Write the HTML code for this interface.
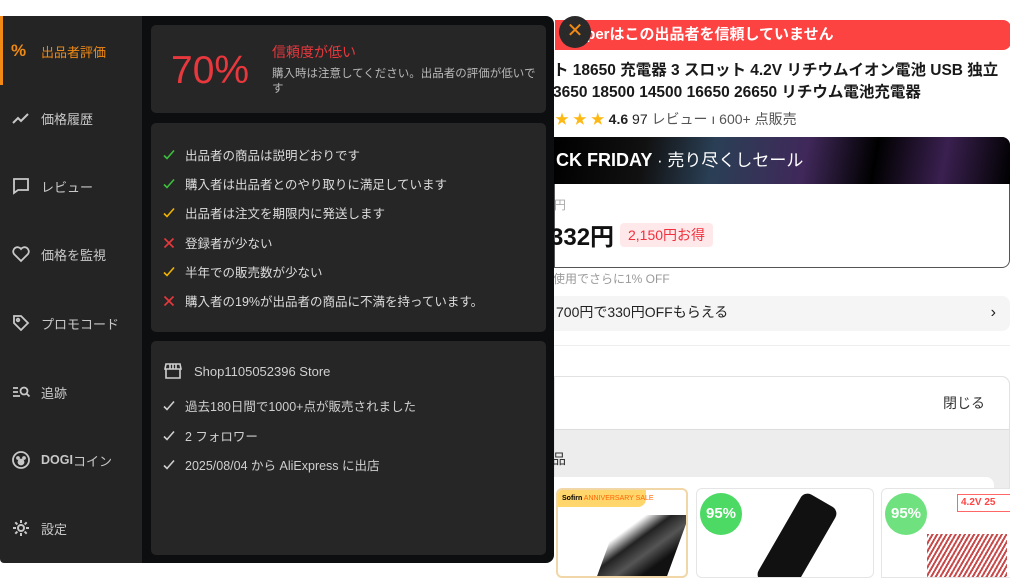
<!DOCTYPE html>
<html><head><meta charset="utf-8"><style>
*{margin:0;padding:0;box-sizing:border-box}
body{width:1024px;height:572px;overflow:hidden;background:#fff;font-family:"Liberation Sans","Noto Sans CJK JP",sans-serif;position:relative}
.a{position:absolute}
.side{left:0;top:16px;width:142px;height:547px;background:#242424;border-radius:0 0 0 4px}
.main{left:142px;top:16px;width:412px;height:547px;background:#0c0e10;border-radius:0 8px 8px 0}
.card{position:absolute;left:9px;width:395px;background:#262626;border-radius:5px}
.it{position:absolute;left:11px;display:flex;align-items:center;color:#c8c8c8;font-size:13px}
.it svg{width:20px;height:20px;margin-right:10px}
.li{position:absolute;left:12px;font-size:12.5px;color:#dcdcdc;display:flex;align-items:center}
.li svg{width:12px;height:12px;margin-right:10px}
</style></head><body>
<div class="a" style="left:555px;top:20px;width:456px;height:30px;background:#fd4242;border-radius:0 8px 8px 0;color:#fff;font-weight:bold;font-size:15px;line-height:30px;padding-left:12px">Al perはこの出品者を信頼していません</div>
<div class="a" style="left:553px;top:60px;font-weight:bold;font-size:15.5px;line-height:22px;color:#191919;white-space:nowrap">ト 18650 充電器 3 スロット 4.2V リチウムイオン電池 USB 独立<br>3650 18500 14500 16650 26650 リチウム電池充電器</div>
<div class="a" style="left:555px;top:109px;font-size:14px;color:#222;white-space:nowrap"><span style="color:#fdb813">★ ★ ★</span> <b>4.6</b> 97 <span style="color:#555">レビュー ı 600+ 点販売</span></div>
<div class="a" style="left:554px;top:137px;width:456px;height:131px;border:1px solid #555;border-radius:0 8px 8px 0"></div>
<div class="a" style="left:554px;top:137px;width:456px;height:47px;background:linear-gradient(100deg,#000 0%,#111 20%,#2a3f55 35%,#40285a 55%,#000 70%,#3a2050 85%,#000);border-radius:0 8px 0 0;color:#fff;font-weight:bold;font-size:18px;line-height:47px;padding-left:2px">CK FRIDAY <span style="font-weight:normal;font-size:17px">· 売り尽くしセール</span></div>
<div class="a" style="left:554px;top:196px;color:#aaa;font-size:12px">円</div>
<div class="a" style="left:550px;top:217px;color:#111;font-weight:bold;font-size:24px">332円</div>
<div class="a" style="left:620px;top:223px;background:#ffe8ea;color:#f0303c;font-size:14px;padding:2px 8px;border-radius:4px">2,150円お得</div>
<div class="a" style="left:553px;top:270px;color:#999;font-size:12px">使用でさらに1% OFF</div>
<div class="a" style="left:554px;top:296px;width:456px;height:35px;background:#f5f5f5;border-radius:0 8px 8px 0;font-size:14px;line-height:33px;color:#222;padding-left:2px">700円で330円OFFもらえる<span style="position:absolute;right:14px;font-size:16px">›</span></div>
<div class="a" style="left:554px;top:345px;width:456px;height:1px;background:#eee"></div>
<div class="a" style="left:554px;top:376px;width:456px;height:200px;border:1px solid #e2e2e2;border-radius:0 8px 0 0;background:#ededed"></div>
<div class="a" style="left:555px;top:377px;width:454px;height:53px;background:#fff;border-radius:0 8px 0 0;border-bottom:1px solid #ddd"></div>
<div class="a" style="left:943px;top:393px;font-size:14px;color:#333">閉じる</div>
<div class="a" style="left:552px;top:449px;font-size:14px;color:#333">品</div>
<div class="a" style="left:554px;top:477px;width:440px;height:100px;background:#fff;border-radius:0 8px 0 0"></div>
<div class="a" style="left:556px;top:488px;width:132px;height:90px;border:2px solid #f1d7a8;border-radius:6px;background:#fff;overflow:hidden">
<div class="a" style="left:0;top:0;width:88px;height:17px;background:#ffd66b;border-radius:0 0 8px 0;font-size:7px;line-height:17px;padding-left:4px;white-space:nowrap"><b>Sofirn</b> <span style="color:#f60">ANNIVERSARY SALE</span></div>
<div class="a" style="left:50px;top:25px;width:70px;height:62px;background:linear-gradient(135deg,#fff 20%,#222 40%,#555 60%,#111 80%);transform:skewX(-20deg)"></div></div>
<div class="a" style="left:696px;top:488px;width:178px;height:90px;border:1px solid #e5e5e5;border-radius:6px;background:#fff;overflow:hidden">
<div class="a" style="left:80px;top:5px;width:40px;height:100px;background:#111;transform:rotate(30deg);border-radius:8px"></div></div>
<div class="a" style="left:700px;top:493px;width:42px;height:42px;border-radius:50%;background:#4cd964;color:#fff;font-weight:bold;font-size:15px;line-height:42px;text-align:center">95%</div>
<div class="a" style="left:881px;top:488px;width:129px;height:90px;border:1px solid #e5e5e5;border-right:none;border-radius:6px 0 0 0;background:#fff;overflow:hidden">
<div class="a" style="left:75px;top:5px;width:60px;height:18px;border:1px solid #f66;color:#f44;font-size:10px;font-weight:bold;padding-left:3px;line-height:16px">4.2V 25</div>
<div class="a" style="left:45px;top:45px;width:80px;height:50px;background:repeating-linear-gradient(120deg,#c94a4a 0 2px,#fff 2px 4px)"></div></div>
<div class="a" style="left:885px;top:493px;width:42px;height:42px;border-radius:50%;background:#6fe27f;color:#fff;font-weight:bold;font-size:15px;line-height:42px;text-align:center">95%</div>
<div class="a" style="left:1010px;top:0;width:14px;height:572px;background:#fff"></div>

<div class="a side">
<div class="a" style="left:0;top:0;width:3px;height:69px;background:#f08a14"></div>
<div class="it" style="top:25px;color:#f08a14"><span style="width:20px;margin-right:10px;font-weight:bold;font-size:17px">%</span>出品者評価</div>
<div class="it" style="top:92px"><svg viewBox="0 0 20 20" fill="none" stroke="#c8c8c8" stroke-width="2"><path d="M2 15l5-5 3 3 7-7"/></svg>価格履歴</div>
<div class="it" style="top:160px"><svg viewBox="0 0 20 20" fill="none" stroke="#c8c8c8" stroke-width="1.8"><path d="M3 3h14v11H7l-4 3z"/></svg>レビュー</div>
<div class="it" style="top:228px"><svg viewBox="0 0 20 20" fill="none" stroke="#c8c8c8" stroke-width="1.8"><path d="M10 17L3 10a4 4 0 0 1 7-5 4 4 0 0 1 7 5z"/></svg>価格を監視</div>
<div class="it" style="top:297px"><svg viewBox="0 0 20 20" fill="none" stroke="#c8c8c8" stroke-width="1.8"><path d="M3 3h7l7 7-7 7-7-7z"/><circle cx="7" cy="7" r="1.3"/></svg>プロモコード</div>
<div class="it" style="top:366px"><svg viewBox="0 0 20 20" fill="none" stroke="#c8c8c8" stroke-width="1.8"><path d="M2 6h5M2 10h5M2 14h7"/><circle cx="13" cy="9" r="3.5"/><path d="M15.5 11.5l3 3"/></svg>追跡</div>
<div class="it" style="top:434px"><svg viewBox="0 0 20 20" fill="none" stroke="#c8c8c8" stroke-width="1.8"><circle cx="10" cy="10" r="8"/><circle cx="10" cy="12" r="2.5" fill="#c8c8c8"/><circle cx="7" cy="8" r="1" fill="#c8c8c8"/><circle cx="13" cy="8" r="1" fill="#c8c8c8"/></svg><b style="font-size:12.5px">DOGI</b>コイン</div>
<div class="it" style="top:502px"><svg viewBox="0 0 20 20" fill="none" stroke="#c8c8c8" stroke-width="2"><circle cx="10" cy="10" r="3"/><path d="M10 2v3M10 15v3M2 10h3M15 10h3M4.3 4.3l2.1 2.1M13.6 13.6l2.1 2.1M4.3 15.7l2.1-2.1M13.6 6.4l2.1-2.1"/></svg>設定</div>
</div>
<div class="a main">
<div class="card" style="top:9px;height:88px">
<div class="a" style="left:20px;top:24px;font-size:39px;color:#e8383d;font-weight:300">70%</div>
<div class="a" style="left:121px;top:17px;font-size:14px;color:#e8383d">信頼度が低い</div>
<div class="a" style="left:121px;top:42px;width:274px;font-size:11.5px;line-height:15px;color:#b8b8b8">購入時は注意してください。出品者の評価が低いです</div>
</div>
<div class="card" style="top:107px;height:209px">
<div class="li" style="top:22px"><svg viewBox="0 0 12 12" fill="none" stroke="#3cc03c" stroke-width="1.6"><path d="M1 6.5l3 3 7-8"/></svg>出品者の商品は説明どおりです</div>
<div class="li" style="top:51px"><svg viewBox="0 0 12 12" fill="none" stroke="#3cc03c" stroke-width="1.6"><path d="M1 6.5l3 3 7-8"/></svg>購入者は出品者とのやり取りに満足しています</div>
<div class="li" style="top:80px"><svg viewBox="0 0 12 12" fill="none" stroke="#f0b400" stroke-width="1.6"><path d="M1 6.5l3 3 7-8"/></svg>出品者は注文を期限内に発送します</div>
<div class="li" style="top:110px"><svg viewBox="0 0 12 12" fill="none" stroke="#e8383d" stroke-width="1.6"><path d="M1.5 1.5l9 9M10.5 1.5l-9 9"/></svg>登録者が少ない</div>
<div class="li" style="top:139px"><svg viewBox="0 0 12 12" fill="none" stroke="#f0b400" stroke-width="1.6"><path d="M1 6.5l3 3 7-8"/></svg>半年での販売数が少ない</div>
<div class="li" style="top:168px"><svg viewBox="0 0 12 12" fill="none" stroke="#e8383d" stroke-width="1.6"><path d="M1.5 1.5l9 9M10.5 1.5l-9 9"/></svg>購入者の19%が出品者の商品に不満を持っています。</div>
</div>
<div class="card" style="top:325px;height:214px">
<div class="li" style="top:20px;font-size:13px;color:#cfcfcf"><svg viewBox="0 0 20 20" fill="none" stroke="#cfcfcf" stroke-width="1.6" style="width:20px;height:20px;margin-right:11px"><path d="M3 3h14l1 5H2zM3 8v9h14V8M7 3v5M10 3v5M13 3v5"/></svg>Shop1105052396 Store</div>
<div class="li" style="top:55px;color:#cfcfcf"><svg viewBox="0 0 12 12" fill="none" stroke="#cfcfcf" stroke-width="1.6"><path d="M1 6.5l3 3 7-8"/></svg>過去180日間で1000+点が販売されました</div>
<div class="li" style="top:85px;color:#cfcfcf"><svg viewBox="0 0 12 12" fill="none" stroke="#cfcfcf" stroke-width="1.6"><path d="M1 6.5l3 3 7-8"/></svg>2 フォロワー</div>
<div class="li" style="top:114px;color:#cfcfcf"><svg viewBox="0 0 12 12" fill="none" stroke="#cfcfcf" stroke-width="1.6"><path d="M1 6.5l3 3 7-8"/></svg>2025/08/04 から AliExpress に出店</div>
</div>
</div>
<div class="a" style="left:559px;top:16px;width:32px;height:32px;border-radius:50%;background:#2a2a2a;color:#f08a14;font-size:20px;line-height:31px;text-align:center">✕</div>
</body></html>
